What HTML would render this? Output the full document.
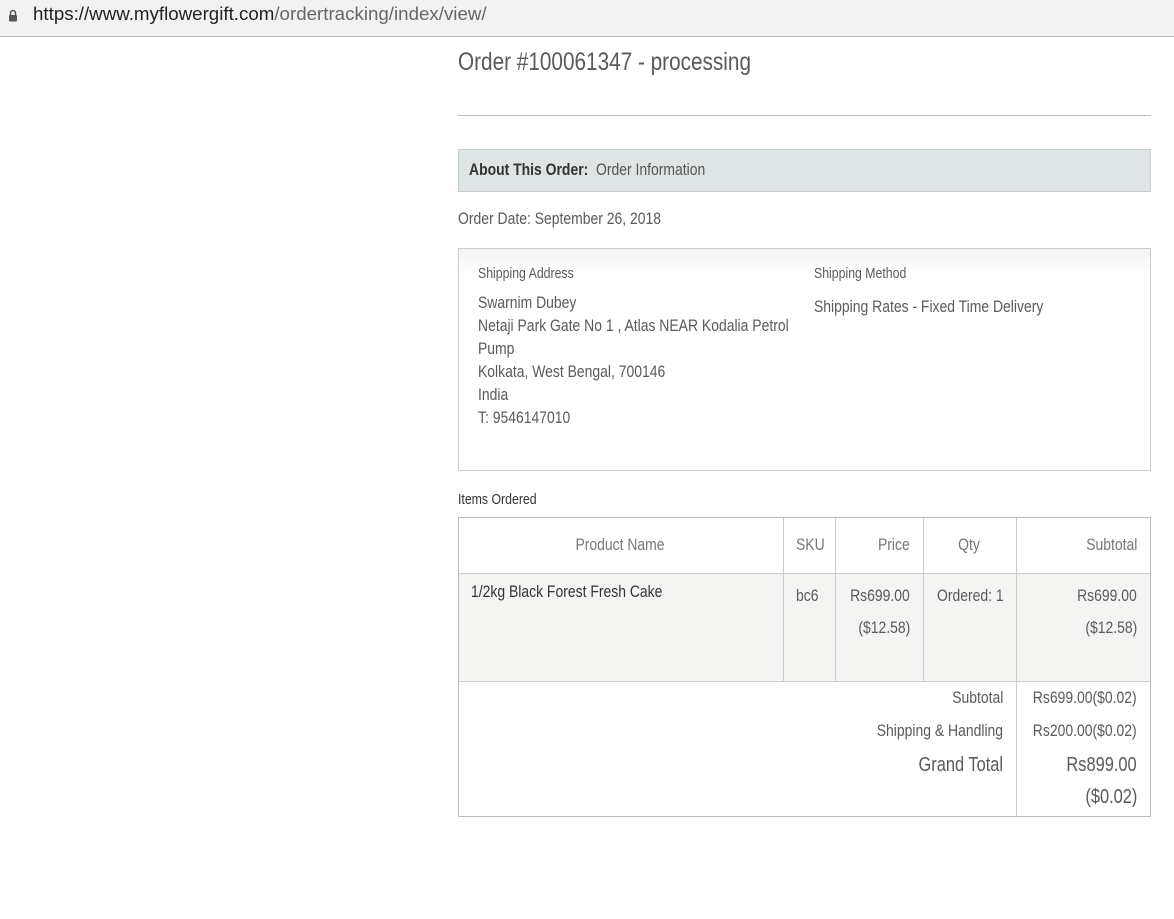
<!DOCTYPE html>
<html><head><meta charset="utf-8"><style>
*{margin:0;padding:0;box-sizing:border-box}
body{width:1174px;height:919px;background:#fff;position:relative;overflow:hidden;font-family:"Liberation Sans",sans-serif;color:#5a5a5a}
.t{position:absolute;white-space:nowrap;line-height:1;transform:scaleX(.82);transform-origin:left center}
.r{transform-origin:right center}
.c{transform-origin:center center}
.box{position:absolute}
</style></head><body>
<div class="box" style="left:0;top:0;width:1174px;height:37px;background:#f2f2f2;border-bottom:1px solid #bbb"></div>
<svg class="box" style="left:8px;top:9px" width="10" height="13" viewBox="0 0 10 13"><path d="M2.5 6V4a2.5 2.5 0 0 1 5 0v2" fill="none" stroke="#555" stroke-width="1.5"/><rect x="1" y="6" width="8" height="6.5" rx="1" fill="#555"/></svg>
<div class="t" style="left:33px;top:5px;font-size:18px;transform:scaleX(1.04);color:#222">https://www.myflowergift.com<span style="color:#666">/ordertracking/index/view/</span></div>
<div class="t" style="left:458px;top:50px;font-size:25px;transform:scaleX(.83)">Order #100061347 - processing</div>
<div class="box" style="left:458px;top:115px;width:693px;height:1px;background:#bbb"></div>
<div class="box" style="left:458px;top:149px;width:693px;height:43px;background:#dfe4e4;border:1px solid #c8cccc"></div>
<div class="t" style="left:469px;top:161px;font-size:17px;color:#333"><b>About This Order:</b>&nbsp; <span style="color:#555">Order Information</span></div>
<div class="t" style="left:458px;top:210px;font-size:17px">Order Date: September 26, 2018</div>
<div class="box" style="left:458px;top:248px;width:693px;height:223px;border:1px solid #ccc;background:linear-gradient(#f3f3f3,#fff 25px)"></div>
<div class="t" style="left:478px;top:266px;font-size:15px">Shipping Address</div>
<div class="t" style="left:814px;top:266px;font-size:15px">Shipping Method</div>
<div class="t" style="left:478px;top:294px;font-size:17px">Swarnim Dubey</div>
<div class="t" style="left:478px;top:317px;font-size:17px">Netaji Park Gate No 1 , Atlas NEAR Kodalia Petrol</div>
<div class="t" style="left:478px;top:340px;font-size:17px">Pump</div>
<div class="t" style="left:478px;top:363px;font-size:17px">Kolkata, West Bengal, 700146</div>
<div class="t" style="left:478px;top:386px;font-size:17px">India</div>
<div class="t" style="left:478px;top:409px;font-size:17px">T: 9546147010</div>
<div class="t" style="left:814px;top:298px;font-size:17px">Shipping Rates - Fixed Time Delivery</div>
<div class="t" style="left:458px;top:492px;font-size:15px;color:#333">Items Ordered</div>
<div class="box" style="left:458px;top:517px;width:693px;height:300px;border:1px solid #bbb"></div>
<div class="box" style="left:459px;top:573px;width:691px;height:109px;background:#f4f4f3;border-top:1px solid #ccc;border-bottom:1px solid #ccc"></div>
<div class="box" style="left:783px;top:518px;width:1px;height:164px;background:#ccc"></div>
<div class="box" style="left:835px;top:518px;width:1px;height:164px;background:#ccc"></div>
<div class="box" style="left:923px;top:518px;width:1px;height:164px;background:#ccc"></div>
<div class="box" style="left:1016px;top:518px;width:1px;height:298px;background:#ccc"></div>
<div class="t c" style="left:560px;width:120px;text-align:center;top:536px;font-size:17px;color:#777">Product Name</div>
<div class="t" style="left:796px;top:536px;font-size:17px;color:#777">SKU</div>
<div class="t r" style="right:264px;top:536px;font-size:17px;color:#777">Price</div>
<div class="t c" style="left:939px;width:60px;text-align:center;top:536px;font-size:17px;color:#777">Qty</div>
<div class="t r" style="right:37px;top:536px;font-size:17px;color:#777">Subtotal</div>
<div class="t" style="left:471px;top:583px;font-size:17px;color:#333">1/2kg Black Forest Fresh Cake</div>
<div class="t" style="left:796px;top:587px;font-size:17px">bc6</div>
<div class="t r" style="right:264px;top:587px;font-size:17px">Rs699.00</div>
<div class="t r" style="right:264px;top:619px;font-size:17px">($12.58)</div>
<div class="t" style="left:937px;top:587px;font-size:17px">Ordered: 1</div>
<div class="t r" style="right:37px;top:587px;font-size:17px">Rs699.00</div>
<div class="t r" style="right:37px;top:619px;font-size:17px">($12.58)</div>
<div class="t r" style="right:171px;top:689px;font-size:17px">Subtotal</div>
<div class="t r" style="right:171px;top:722px;font-size:17px">Shipping &amp; Handling</div>
<div class="t r" style="right:171px;top:755px;font-size:20px">Grand Total</div>
<div class="t r" style="right:37px;top:689px;font-size:17px">Rs699.00($0.02)</div>
<div class="t r" style="right:37px;top:722px;font-size:17px">Rs200.00($0.02)</div>
<div class="t r" style="right:37px;top:755px;font-size:20px">Rs899.00</div>
<div class="t r" style="right:37px;top:787px;font-size:20px">($0.02)</div>
</body></html>
